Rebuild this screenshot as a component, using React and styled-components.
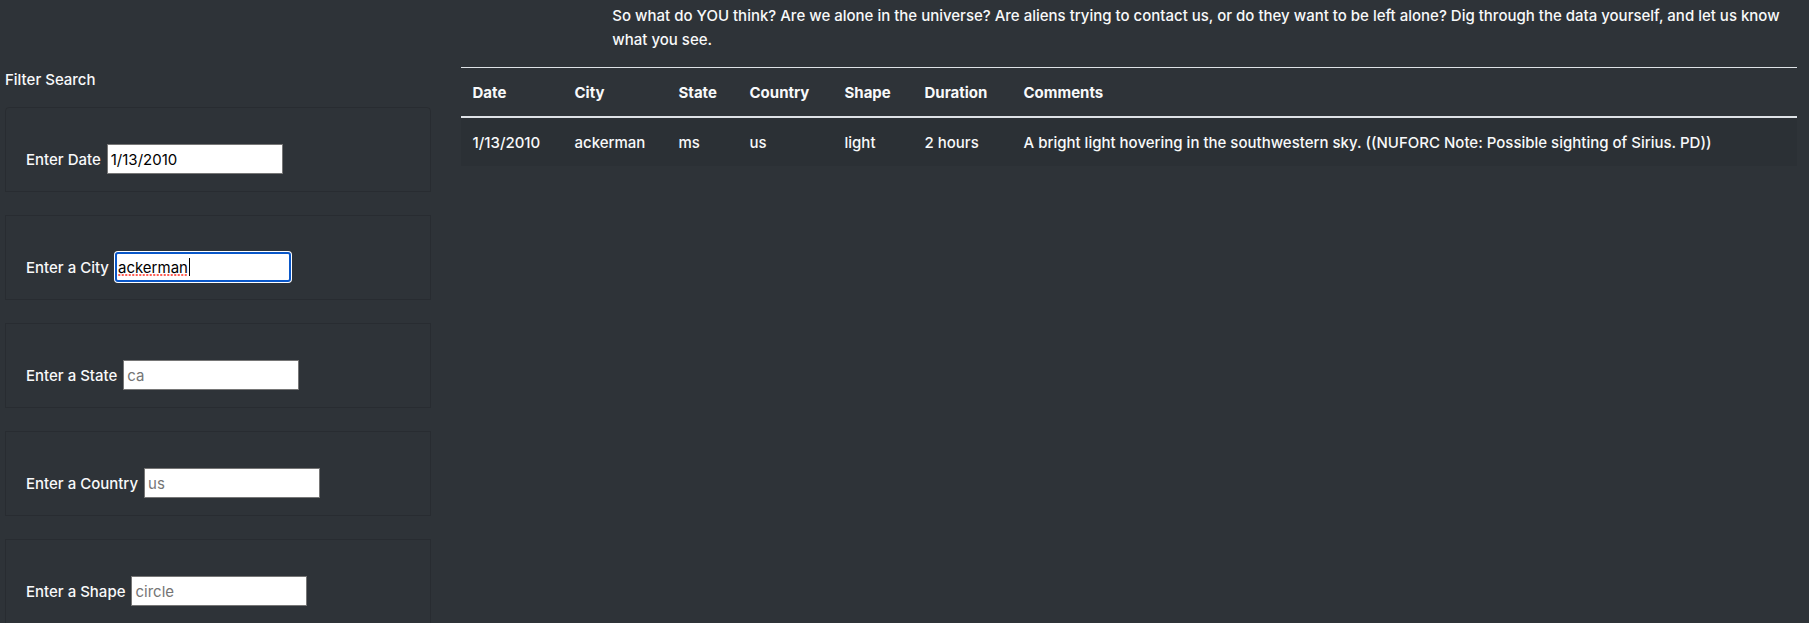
import React, { useState } from 'react';
import styled, { createGlobalStyle, css } from 'styled-components';

const GlobalStyle = createGlobalStyle`
  *, *::before, *::after { box-sizing: border-box; }
  body {
    margin: 0;
    background: #2e3338;
    color: #f8f9fa;
    font-family: Inter, "Liberation Sans", sans-serif;
    font-size: 15px;
    font-weight: 500;
    line-height: 24px;
  }
`;

const Page = styled.div`
  height: 100vh;
  overflow: hidden;
  padding-top: 4px;
`;

const Row = styled.div`
  display: grid;
  grid-template-columns: minmax(0, 1fr) minmax(0, ${(p) => p.$main}fr);
  margin: 0 -3px 0 -10px;
`;

const Column = styled.div`
  grid-column: ${(p) => p.$start || 'auto'};
  padding: 0 15px;
`;

const Intro = styled.p`
  margin: 0 0 15px;
`;

const Filters = styled.form`
  display: flex;
  flex-direction: column;
`;

const FilterTitle = styled.p`
  margin: 1px 0 15px;
`;

const FilterList = styled.ul`
  display: flex;
  flex-direction: column;
  gap: 23px;
  margin: 0;
  padding: 0;
  list-style: none;
`;

const FilterItem = styled.li`
  display: flex;
  align-items: baseline;
  gap: 6px;
  padding: 36px 20px 17px;
  border: 1px solid rgba(0, 0, 0, 0.125);

  &:first-child { border-radius: 4px 4px 0 0; }
`;

const Field = styled.span`
  position: relative;
  display: flex;
`;

const TextInput = styled.input`
  width: 176px;
  height: 30px;
  padding: 0 3px;
  border: 1px solid #767676;
  border-radius: 0;
  outline: none;
  background: #fff;
  color: #000;
  font: inherit;
  font-weight: 400;

  &::placeholder { color: #757575; opacity: 1; }

  ${(p) => p.$active && css`
    padding: 0 1px;
    border: 2px solid #0a57c8;
    border-radius: 3px;
    box-shadow: 0 0 0 1px #fff;
  `}
`;

const EditMarks = styled.svg`
  position: absolute;
  left: 3px;
  top: 6px;
  pointer-events: none;
`;

const Table = styled.table`
  width: 100%;
  table-layout: fixed;
  border-collapse: collapse;
  text-align: left;
`;

const Col = styled.col`
  width: ${(p) => p.$width};
`;

const HeadCell = styled.th`
  padding: 13px 12px 11px;
  border-top: 1px solid #dee2e6;
  border-bottom: 2px solid #dee2e6;
  font-weight: 700;
`;

const Cell = styled.td`
  padding: 13px 12px 11px;
  background: rgba(0, 0, 0, 0.05);
`;

const filters = [
  { id: 'datetime', label: 'Enter Date', value: '1/13/2010' },
  { id: 'city', label: 'Enter a City', value: 'ackerman', active: true },
  { id: 'state', label: 'Enter a State', placeholder: 'ca' },
  { id: 'country', label: 'Enter a Country', placeholder: 'us' },
  { id: 'shape', label: 'Enter a Shape', placeholder: 'circle' },
];

const columns = [
  ['Date', '102px'],
  ['City', '104px'],
  ['State', '71px'],
  ['Country', '95px'],
  ['Shape', '80px'],
  ['Duration', '99px'],
  ['Comments', 'auto'],
];

const sightings = [
  ['1/13/2010', 'ackerman', 'ms', 'us', 'light', '2 hours',
    'A bright light hovering in the southwestern sky. ((NUFORC Note: Possible sighting of Sirius. PD))'],
];

function Filter({ id, label, value = '', placeholder, active }) {
  const [text, setText] = useState(value);
  return (
    <FilterItem>
      <label htmlFor={id}>{label}</label>
      <Field>
        <TextInput
          id={id}
          type="text"
          value={text}
          placeholder={placeholder}
          $active={active}
          onChange={(e) => setText(e.target.value)}
        />
        {active && (
          <EditMarks width="76" height="19" aria-hidden="true">
            <line x1="1" y1="17" x2="70" y2="17" stroke="#ff5a50" strokeWidth="2" strokeLinecap="round" strokeDasharray="0.5 3" />
            <rect x="71" y="0" width="1" height="18" fill="#000" />
          </EditMarks>
        )}
      </Field>
    </FilterItem>
  );
}

export default function App() {
  return (
    <Page>
      <GlobalStyle />
      <Row $main={2}>
        <Column $start={2}>
          <Intro>
            So what do YOU think? Are we alone in the universe? Are aliens trying to contact us, or do they
            want to be left alone? Dig through the data yourself, and let us know what you see.
          </Intro>
        </Column>
      </Row>
      <Row $main={3}>
        <Column>
          <Filters>
            <FilterTitle>Filter Search</FilterTitle>
            <FilterList>
              {filters.map((f) => <Filter key={f.id} {...f} />)}
            </FilterList>
          </Filters>
        </Column>
        <Column>
          <Table>
            <colgroup>
              {columns.map(([name, width]) => <Col key={name} $width={width} />)}
            </colgroup>
            <thead>
              <tr>{columns.map(([name]) => <HeadCell key={name} scope="col">{name}</HeadCell>)}</tr>
            </thead>
            <tbody>
              {sightings.map((row) => (
                <tr key={row.join()}>{row.map((cell, i) => <Cell key={columns[i][0]}>{cell}</Cell>)}</tr>
              ))}
            </tbody>
          </Table>
        </Column>
      </Row>
    </Page>
  );
}
